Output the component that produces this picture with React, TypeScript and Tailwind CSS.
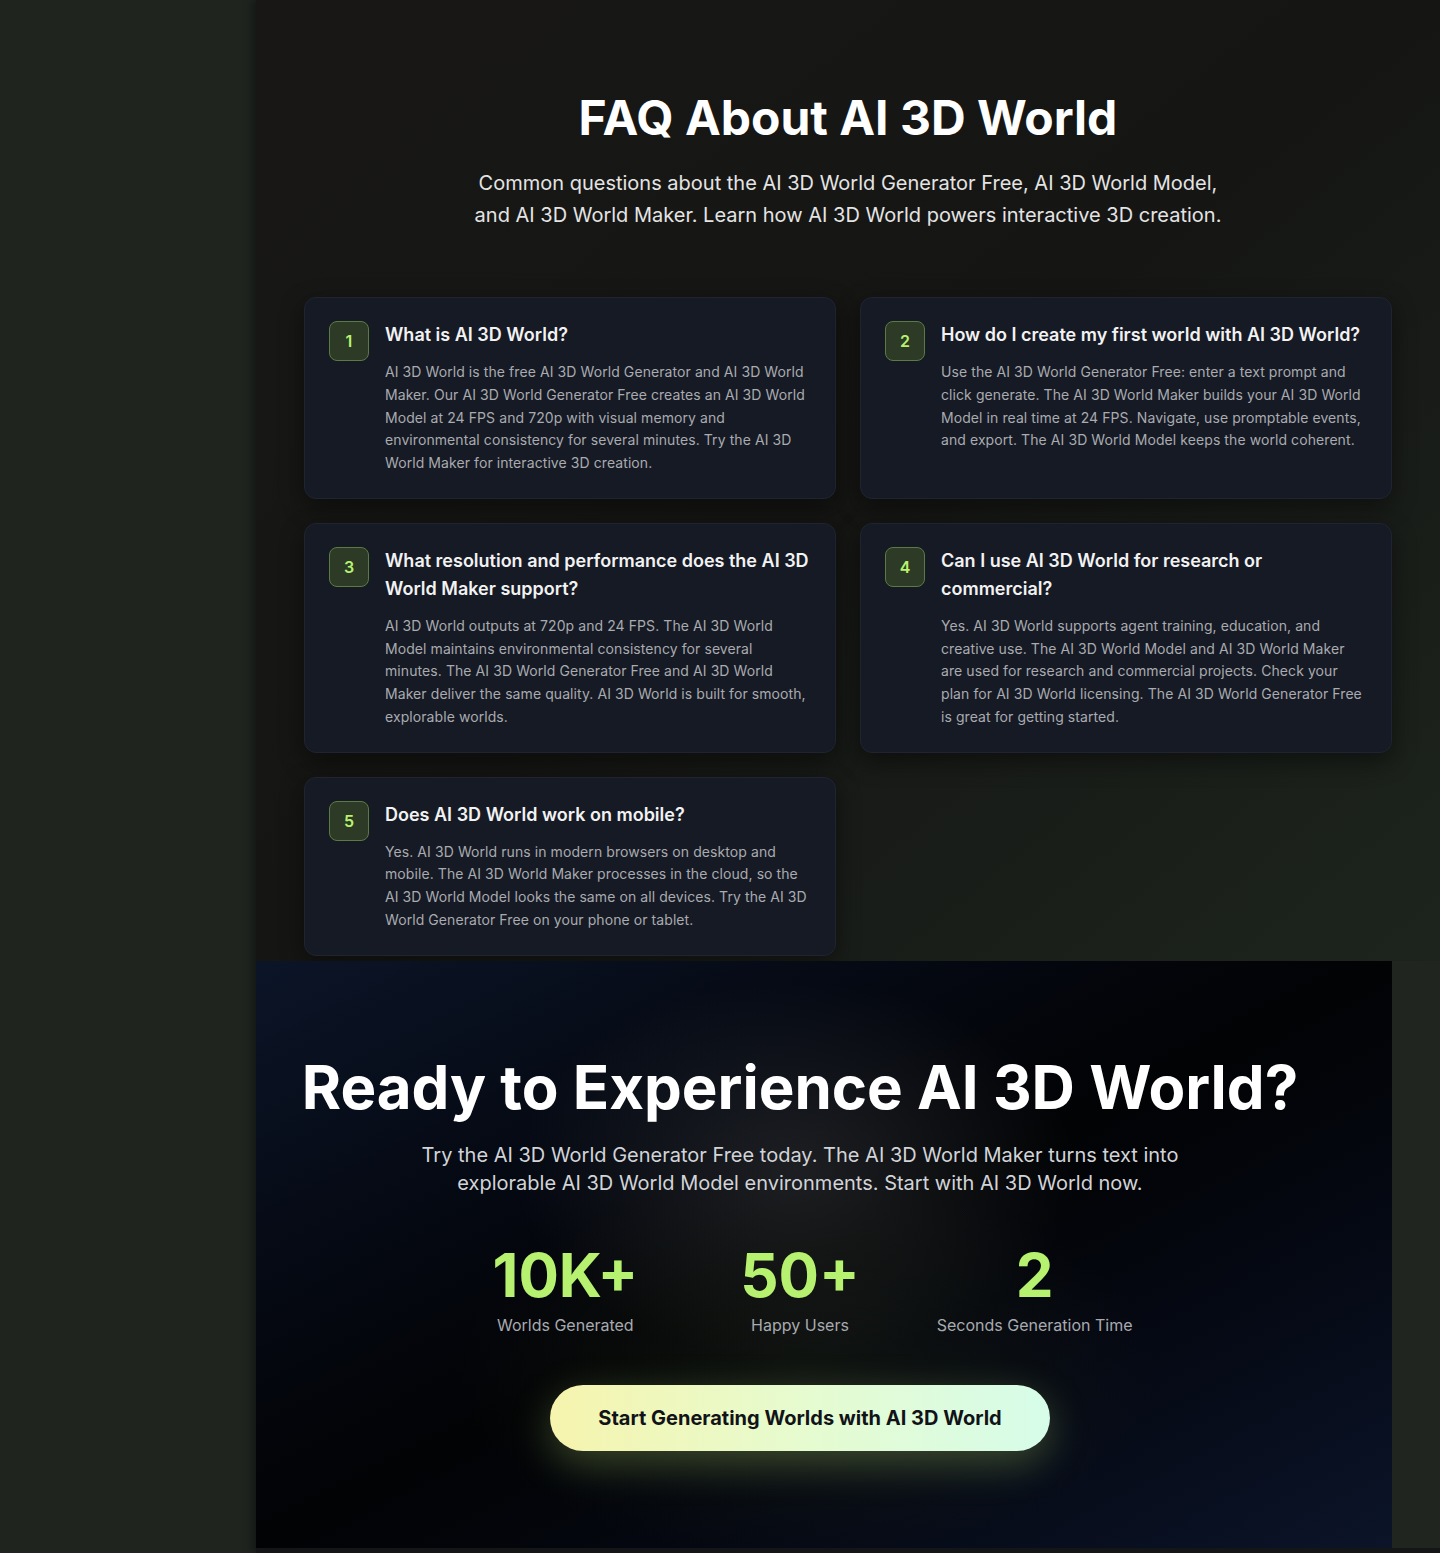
const faqs = [
  {
    q: "What is AI 3D World?",
    a: "AI 3D World is the free AI 3D World Generator and AI 3D World Maker. Our AI 3D World Generator Free creates an AI 3D World Model at 24 FPS and 720p with visual memory and environmental consistency for several minutes. Try the AI 3D World Maker for interactive 3D creation.",
  },
  {
    q: "How do I create my first world with AI 3D World?",
    a: "Use the AI 3D World Generator Free: enter a text prompt and click generate. The AI 3D World Maker builds your AI 3D World Model in real time at 24 FPS. Navigate, use promptable events, and export. The AI 3D World Model keeps the world coherent.",
  },
  {
    q: "What resolution and performance does the AI 3D World Maker support?",
    a: "AI 3D World outputs at 720p and 24 FPS. The AI 3D World Model maintains environmental consistency for several minutes. The AI 3D World Generator Free and AI 3D World Maker deliver the same quality. AI 3D World is built for smooth, explorable worlds.",
  },
  {
    q: "Can I use AI 3D World for research or commercial?",
    a: "Yes. AI 3D World supports agent training, education, and creative use. The AI 3D World Model and AI 3D World Maker are used for research and commercial projects. Check your plan for AI 3D World licensing. The AI 3D World Generator Free is great for getting started.",
  },
  {
    q: "Does AI 3D World work on mobile?",
    a: "Yes. AI 3D World runs in modern browsers on desktop and mobile. The AI 3D World Maker processes in the cloud, so the AI 3D World Model looks the same on all devices. Try the AI 3D World Generator Free on your phone or tablet.",
  },
];

const stats = [
  { value: "10K+", label: "Worlds Generated" },
  { value: "50+", label: "Happy Users" },
  { value: "2", label: "Seconds Generation Time" },
];

function FaqCard({ index, q, a }: { index: number; q: string; a: string }) {
  return (
    <div className="flex gap-4 rounded-xl border border-[#1f2430] bg-[#161a25] px-6 py-[23px] shadow-[0_8px_24px_rgba(0,0,0,0.45)]">
      <div className="flex h-10 w-10 shrink-0 items-center justify-center rounded-lg border border-[#5c7a43] bg-[#2c3a26] text-base font-semibold text-[#b8f26e]">
        {index}
      </div>
      <div className="flex flex-col">
        <h3 className="text-lg leading-7 font-semibold text-[#f2f2f2]">{q}</h3>
        <p className="mt-3 text-sm leading-[22.75px] tracking-[0.08px] text-[#a9abaf]">{a}</p>
      </div>
    </div>
  );
}

export default function App() {
  return (
    <div
      className="flex min-h-[1553px] w-full bg-[#20261f]"
      style={{ fontFamily: "Inter, 'Noto Sans', sans-serif" }}
    >
      {/* sidebar space */}
      <aside className="w-64 shrink-0 bg-[#1f241f]" />

      <main className="flex min-w-0 flex-1 flex-col shadow-[-4px_0_8px_rgba(0,0,0,0.35)]">
        {/* FAQ */}
        <section className="bg-gradient-to-br from-[#181715] via-[#151614] to-[#1d241d] px-12 pt-[94px] pb-[5px]">
          <h2 className="text-center text-5xl leading-none font-bold text-white">
            FAQ About AI 3D World
          </h2>
          <p className="mx-auto mt-[25px] max-w-3xl text-center text-xl leading-8 text-[#e4e4e4]">
            Common questions about the AI 3D World Generator Free, AI 3D World Model, and AI 3D
            World Maker. Learn how AI 3D World powers interactive 3D creation.
          </p>
          <div className="mt-[66px] grid grid-cols-2 gap-6">
            {faqs.map((f, i) => (
              <FaqCard key={i} index={i + 1} q={f.q} a={f.a} />
            ))}
          </div>
        </section>

        {/* CTA */}
        <section className="relative mr-12 overflow-hidden bg-gradient-to-br from-[#0c1528] via-[#020305] to-[#0c1429] pt-24 pb-[97px] pr-12">
          <div className="pointer-events-none absolute left-[260px] top-[20px] h-[380px] w-[560px] rounded-full bg-[radial-gradient(closest-side,rgba(60,62,64,0.45),transparent)]" />
          <div className="pointer-events-none absolute left-[200px] top-[220px] h-[380px] w-[700px] rounded-full bg-[radial-gradient(closest-side,rgba(40,48,30,0.35),transparent)]" />
          <div className="relative flex flex-col items-center">
            <h2 className="text-6xl leading-none font-bold whitespace-nowrap text-white">
              Ready to Experience AI 3D World?
            </h2>
            <p className="mt-6 max-w-3xl text-center text-xl leading-7 text-[#d2d4d8]">
              Try the AI 3D World Generator Free today. The AI 3D World Maker turns text into
              explorable AI 3D World Model environments. Start with AI 3D World now.
            </p>
            <div className="mt-12 grid w-full max-w-2xl grid-cols-3 gap-8">
              {stats.map((s) => (
                <div key={s.label} className="flex flex-col items-center">
                  <span className="text-6xl leading-none font-bold text-[#b6f26f]">
                    {s.value}
                  </span>
                  <span className="mt-2 text-base leading-6 text-[#a8aab0]">{s.label}</span>
                </div>
              ))}
            </div>
            <button className="mt-12 rounded-full bg-gradient-to-r from-[#f6f4ad] via-[#e6fbcf] to-[#d6fce9] px-12 py-[19px] text-xl leading-7 font-bold text-[#111318] shadow-[0_12px_40px_rgba(190,230,120,0.28)]">
              Start Generating Worlds with AI 3D World
            </button>
          </div>
        </section>
        <div className="h-[5px] bg-[#141517]" />
      </main>
    </div>
  );
}
